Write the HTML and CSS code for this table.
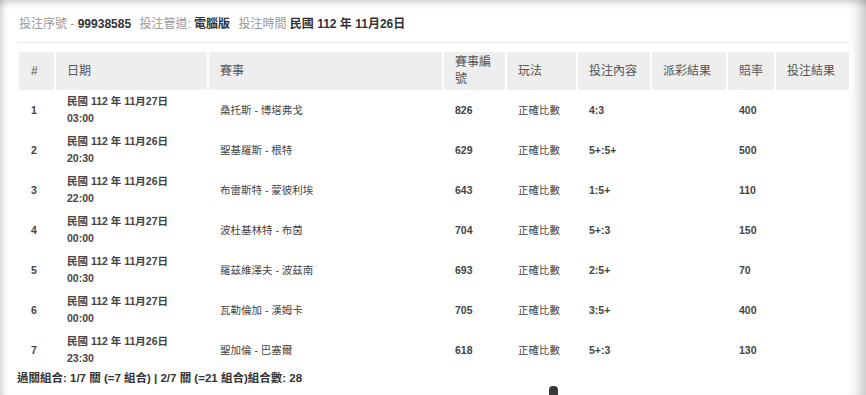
FILE: index.html
```html
<!DOCTYPE html>
<html lang="zh-Hant">
<head>
<meta charset="utf-8">
<link rel="stylesheet" href="styles.css">
</head>
<body>
<div class="frame">
  <div class="info">
    <span class="lbl">投注序號 -</span> <b class="val">99938585</b>
    <span class="lbl gap">投注管道:</span> <b class="val">電腦版</b>
    <span class="lbl gap">投注時間</span> <b class="val">民國 112 年 11月26日</b>
  </div>
  <div class="rule"></div>
  <table class="bets">
    <colgroup>
      <col class="c1"><col class="c2"><col class="c3"><col class="c4"><col class="c5"><col class="c6"><col class="c7"><col class="c8"><col class="c9">
    </colgroup>
    <thead>
      <tr><th>#</th><th>日期</th><th>賽事</th><th>賽事編號</th><th>玩法</th><th>投注內容</th><th>派彩結果</th><th>賠率</th><th>投注結果</th></tr>
    </thead>
    <tbody>
      <tr><td class="b">1</td><td class="b">民國 112 年 11月27日<br>03:00</td><td>桑托斯 - 博塔弗戈</td><td class="b">826</td><td>正確比數</td><td class="b">4:3</td><td></td><td class="b">400</td><td></td></tr>
      <tr><td class="b">2</td><td class="b">民國 112 年 11月26日<br>20:30</td><td>聖基羅斯 - 根特</td><td class="b">629</td><td>正確比數</td><td class="b">5+:5+</td><td></td><td class="b">500</td><td></td></tr>
      <tr><td class="b">3</td><td class="b">民國 112 年 11月26日<br>22:00</td><td>布雷斯特 - 蒙彼利埃</td><td class="b">643</td><td>正確比數</td><td class="b">1:5+</td><td></td><td class="b">110</td><td></td></tr>
      <tr><td class="b">4</td><td class="b">民國 112 年 11月27日<br>00:00</td><td>波杜基林特 - 布茵</td><td class="b">704</td><td>正確比數</td><td class="b">5+:3</td><td></td><td class="b">150</td><td></td></tr>
      <tr><td class="b">5</td><td class="b">民國 112 年 11月27日<br>00:30</td><td>羅茲維澤夫 - 波茲南</td><td class="b">693</td><td>正確比數</td><td class="b">2:5+</td><td></td><td class="b">70</td><td></td></tr>
      <tr><td class="b">6</td><td class="b">民國 112 年 11月27日<br>00:00</td><td>瓦勒倫加 - 漢姆卡</td><td class="b">705</td><td>正確比數</td><td class="b">3:5+</td><td></td><td class="b">400</td><td></td></tr>
      <tr><td class="b">7</td><td class="b">民國 112 年 11月26日<br>23:30</td><td>聖加倫 - 巴塞爾</td><td class="b">618</td><td>正確比數</td><td class="b">5+:3</td><td></td><td class="b">130</td><td></td></tr>
    </tbody>
  </table>
  <div class="summary">過關組合: 1/7 關 (=7 組合) | 2/7 關 (=21 組合)組合數: 28</div>
  <div class="blob"></div>
</div>
</body>
</html>
```
FILE: styles.css
```css
html, body {
  margin: 0;
  padding: 0;
  background: #fff;
}
body {
  font-family: "Liberation Sans", Arial, "Noto Sans CJK TC", sans-serif;
  color: #333;
}
.frame {
  position: relative;
  height: 395px;
  box-sizing: border-box;
  padding: 16px 17px 0 19px;
  overflow: hidden;
  box-shadow:
    inset 0 10px 8px -8px rgba(0, 0, 0, 0.22),
    inset 7px 0 6px -5px rgba(0, 0, 0, 0.2),
    inset -16px 0 12px -10px rgba(0, 0, 0, 0.22);
}
.info {
  font-size: 12px;
  line-height: 17px;
  height: 17px;
  white-space: nowrap;
}
.info .lbl { color: #999; }
.info .gap { margin-left: 5px; }
.info .val { color: #333; font-weight: bold; }
.rule {
  height: 1px;
  background: #eaeaea;
  margin: 9px 0 9px -1px;
}
.bets {
  width: 830px;
  table-layout: fixed;
  border-collapse: separate;
  border-spacing: 0;
}
.c1 { width: 35px; }
.c2 { width: 153px; }
.c3 { width: 235px; }
.c4 { width: 63px; }
.c5 { width: 71px; }
.c6 { width: 74px; }
.c7 { width: 76px; }
.c8 { width: 48px; }
.c9 { width: 75px; }
.bets th {
  background: #eeeeee;
  color: #555;
  font-weight: normal;
  font-size: 12px;
  line-height: 17px;
  text-align: left;
  vertical-align: middle;
  padding: 2px 10px 2px 11px;
  border-left: 2px solid #fff;
  height: 34px;
}
.bets th:first-child,
.bets td:first-child {
  border-left: 0;
  padding-left: 12px;
}
.bets td {
  font-size: 10.5px;
  line-height: 17px;
  color: #444;
  vertical-align: middle;
  padding: 3px 10px 3px 11px;
  border-left: 2px solid transparent;
  height: 34px;
  white-space: nowrap;
}
.bets td.b {
  font-weight: bold;
  color: #444;
}
.summary {
  font-size: 11.5px;
  line-height: 17px;
  font-weight: bold;
  color: #333;
  margin-left: -2px;
}
.blob {
  position: absolute;
  left: 549px;
  top: 386px;
  width: 9px;
  height: 12px;
  border-radius: 4px 4px 0 0;
  background: #3a3a3a;
}
```
